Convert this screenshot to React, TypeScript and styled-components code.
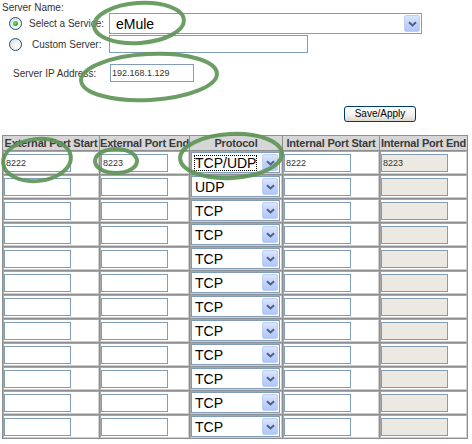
import React from "react";
import styled, { createGlobalStyle } from "styled-components";

const GlobalStyle = createGlobalStyle`
  html, body {
    margin: 0;
    padding: 0;
    background: #ffffff;
  }
  body {
    font-family: "Liberation Sans", Arial, sans-serif;
    font-size: 10px;
    color: #333333;
  }
`;

const Page = styled.div`
  position: relative;
  width: 472px;
  height: 444px;
  padding: 2px 0 0 2px;
  box-sizing: border-box;
  overflow: hidden;
`;

const Title = styled.div`
  height: 11px;
  line-height: 11px;
  font-size: 10px;
`;

const FieldRow = styled.div<{ $h: number; $top?: number }>`
  display: flex;
  align-items: center;
  height: ${(p) => p.$h}px;
  margin-top: ${(p) => p.$top ?? 0}px;
`;

const Lead = styled.div<{ $w: number; $pad: number }>`
  display: flex;
  align-items: center;
  flex: none;
  width: ${(p) => p.$w}px;
  padding-left: ${(p) => p.$pad}px;
  box-sizing: border-box;
`;

const Radio = styled.span<{ $on?: boolean }>`
  position: relative;
  flex: none;
  width: 13px;
  height: 13px;
  border-radius: 50%;
  border: 1px solid #1c5180;
  box-sizing: border-box;
  background: radial-gradient(circle at 65% 65%, #ffffff 0%, #f2f1ec 40%, #d6d4cc 100%);

  &::after {
    content: "";
    display: ${(p) => (p.$on ? "block" : "none")};
    position: absolute;
    left: 3px;
    top: 3px;
    width: 5px;
    height: 5px;
    border-radius: 50%;
    background: radial-gradient(circle at 40% 40%, #7be37b 0%, #21a121 70%, #1a7d1a 100%);
  }
`;

const Label = styled.span<{ $gap: number }>`
  margin-left: ${(p) => p.$gap}px;
  white-space: nowrap;
  font-size: 10px;
`;

const SelectBox = styled.div<{ $w: number; $h: number; $fs: number }>`
  display: flex;
  align-items: center;
  flex: none;
  width: ${(p) => p.$w}px;
  height: ${(p) => p.$h}px;
  border: 1px solid #7f9db9;
  box-sizing: border-box;
  background: #ffffff;
  font-family: "Liberation Sans", Arial, sans-serif;
  font-size: ${(p) => p.$fs}px;
  color: #000000;
`;

const SelectText = styled.span<{ $focus?: boolean; $pad: number }>`
  flex: 1;
  margin-left: ${(p) => p.$pad}px;
  line-height: 16px;
  white-space: nowrap;
  overflow: hidden;
  span {
    display: inline-block;
    padding: 0 1px;
    outline: ${(p) => (p.$focus ? "1px dotted #000" : "none")};
    outline-offset: -1px;
  }
`;

const DropButton = styled.span`
  flex: none;
  display: flex;
  align-items: center;
  justify-content: center;
  width: 16px;
  height: calc(100% - 2px);
  margin-right: 1px;
  border: 1px solid #bdcff5;
  border-radius: 2px;
  box-sizing: border-box;
  background: linear-gradient(#dbe6fd, #c0d2f9 55%, #b2c7f5);
`;

const TextInput = styled.input<{ $w: number; $h?: number; $off?: boolean }>`
  flex: none;
  width: ${(p) => p.$w}px;
  height: ${(p) => p.$h ?? 18}px;
  margin: 0;
  padding: 0 1px;
  border: 1px solid #7f9db9;
  box-sizing: border-box;
  background: ${(p) => (p.$off ? "#ebe9e1" : "#ffffff")};
  font-family: "Liberation Sans", Arial, sans-serif;
  font-size: 9px;
  color: #333333;
  outline: none;
`;

const SaveButton = styled.button`
  display: block;
  margin: 24px 0 0 342px;
  width: 72px;
  height: 16px;
  padding: 0;
  border: 1px solid #003c74;
  border-radius: 3px;
  background: linear-gradient(#ffffff, #f3f2ee 55%, #dcd7cb);
  font-family: "Liberation Sans", Arial, sans-serif;
  font-size: 10px;
  line-height: 12px;
  color: #000000;
`;

const PortGrid = styled.div`
  display: grid;
  grid-template-columns: 96px 89px 92px 96px 87px;
  grid-template-rows: 14px;
  grid-auto-rows: 23px;
  gap: 1px;
  width: 466px;
  margin-top: 13px;
  padding: 1px;
  box-sizing: border-box;
  background: #8e8e8e;
`;

const HeadCell = styled.div`
  background: #d6d6d6;
  font-weight: bold;
  font-size: 11px;
  letter-spacing: -0.2px;
  line-height: 14px;
  text-align: center;
  white-space: nowrap;
  overflow: hidden;
  color: #3a3a3a;
`;

const BodyCell = styled.div`
  display: flex;
  align-items: center;
  background: #ffffff;
  border: 1px solid;
  border-color: #a6a6a6 #d0d0d0 #d0d0d0 #a6a6a6;
`;

const Marks = styled.svg`
  position: absolute;
  left: 0;
  top: 0;
  pointer-events: none;
`;

const Chevron = () => (
  <svg width="9" height="6" viewBox="0 0 9 6">
    <path d="M1 1.2 L4.5 4.5 L8 1.2" fill="none" stroke="#4d6185" strokeWidth="2" />
  </svg>
);

const FakeSelect: React.FC<{
  value: string;
  w: number;
  h: number;
  fs: number;
  pad: number;
  focus?: boolean;
}> = ({ value, w, h, fs, pad, focus }) => (
  <SelectBox $w={w} $h={h} $fs={fs}>
    <SelectText $focus={focus} $pad={pad}>
      <span>{value}</span>
    </SelectText>
    <DropButton>
      <Chevron />
    </DropButton>
  </SelectBox>
);

const protocols = ["TCP/UDP", "UDP", "TCP", "TCP", "TCP", "TCP", "TCP", "TCP", "TCP", "TCP", "TCP", "TCP"];

const headers = [
  "External Port Start",
  "External Port End",
  "Protocol",
  "Internal Port Start",
  "Internal Port End",
];

export default function App() {
  return (
    <>
      <GlobalStyle />
      <Page>
        <Title>Server Name:</Title>

        <FieldRow $h={21}>
          <Lead $w={107} $pad={7}>
            <Radio $on />
            <Label $gap={7}>Select a Service:</Label>
          </Lead>
          <FakeSelect value="eMule" w={313} h={21} fs={14} pad={5} />
        </FieldRow>

        <FieldRow $h={18} $top={1}>
          <Lead $w={107} $pad={7}>
            <Radio />
            <Label $gap={10}>Custom Server:</Label>
          </Lead>
          <TextInput $w={199} defaultValue="" />
        </FieldRow>

        <FieldRow $h={18} $top={11}>
          <Lead $w={108} $pad={11}>
            <Label $gap={0}>Server IP Address:</Label>
          </Lead>
          <TextInput $w={84} defaultValue="192.168.1.129" />
        </FieldRow>

        <SaveButton>Save/Apply</SaveButton>

        <PortGrid>
          {headers.map((h) => (
            <HeadCell key={h}>{h}</HeadCell>
          ))}
          {protocols.map((proto, i) => (
            <React.Fragment key={i}>
              <BodyCell>
                <TextInput $w={67} defaultValue={i === 0 ? "8222" : ""} />
              </BodyCell>
              <BodyCell>
                <TextInput $w={67} defaultValue={i === 0 ? "8223" : ""} />
              </BodyCell>
              <BodyCell>
                <FakeSelect value={proto} w={89} h={21} fs={14} pad={2} focus={i === 0} />
              </BodyCell>
              <BodyCell>
                <TextInput $w={67} defaultValue={i === 0 ? "8222" : ""} />
              </BodyCell>
              <BodyCell>
                <TextInput $w={67} $off defaultValue={i === 0 ? "8223" : ""} />
              </BodyCell>
            </React.Fragment>
          ))}
        </PortGrid>

        <Marks width="472" height="444" viewBox="0 0 472 444">
          <g fill="none" stroke="#5f9557" strokeWidth="4" opacity="0.92">
            <ellipse cx="139" cy="23" rx="45" ry="20" transform="rotate(-4 139 23)" />
            <ellipse cx="149" cy="77" rx="68" ry="23" transform="rotate(-3 149 77)" />
            <ellipse cx="37" cy="160" rx="34" ry="21" transform="rotate(-6 37 160)" />
            <ellipse cx="116" cy="161" rx="21" ry="12" />
            <ellipse cx="231" cy="156" rx="51" ry="22" transform="rotate(-3 231 156)" />
          </g>
        </Marks>
      </Page>
    </>
  );
}
